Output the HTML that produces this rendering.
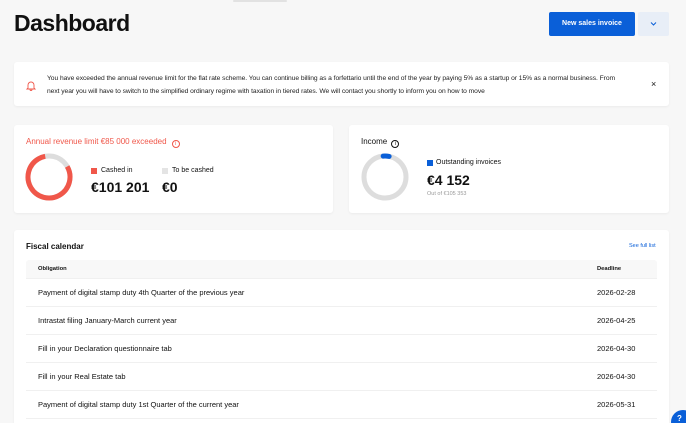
<!DOCTYPE html>
<html style="overflow:hidden;width:686px;height:423px"><head><style>
*{margin:0;padding:0;box-sizing:border-box}
body{width:686px;height:423px;overflow:hidden;background:#f7f7f7;font-family:"Liberation Sans",sans-serif;color:#111;position:relative}
.abs{position:absolute}
.card{position:absolute;background:#fff;border-radius:3px;box-shadow:0 1px 2px rgba(0,0,0,.05)}
.row{position:absolute;left:26px;width:631px;height:28px;border-bottom:1px solid #f0f0f0;font-size:7.5px;line-height:28px}
.row span{position:absolute;left:12px}
.row b{position:absolute;left:571px;font-weight:normal}
.info{display:inline-block;width:8px;height:8px;border:1px solid;border-radius:50%;vertical-align:-1px;font-size:5.5px;text-align:center;line-height:6px}
</style></head><body>
<div class="abs" style="left:233px;top:0;width:54px;height:2px;background:#e2e2e2;border-radius:1px"></div>
<div class="abs" style="left:14px;top:10px;font-size:23px;font-weight:bold;letter-spacing:-0.5px">Dashboard</div>
<div class="abs" style="left:549px;top:12px;width:86px;height:24px;background:#0a5fd8;border-radius:2px;color:#fff;font-size:7px;font-weight:bold;text-align:center;line-height:24px">New sales invoice</div>
<div class="abs" style="left:638px;top:12px;width:31px;height:24px;background:#e8eef7;border-radius:2px"><svg width="31" height="24"><path d="M13 10.5l2.5 2.5 2.5-2.5" stroke="#0a5fd8" fill="none" stroke-width="1"/></svg></div>

<div class="card" style="left:14px;top:62px;width:655px;height:44px">
<svg class="abs" style="left:12px;top:18px" width="10" height="11"><path d="M2 8V5a3 3 0 016 0v3l1 1H1z M4 9.5a1 1 0 002 0" stroke="#f0574a" fill="none" stroke-width="0.9"/></svg>
<div class="abs" style="left:33px;top:11px;width:615px;font-size:6.7px;line-height:12.7px;color:#222;letter-spacing:-0.05px;white-space:nowrap">You have exceeded the annual revenue limit for the flat rate scheme. You can continue billing as a forfettario until the end of the year by paying 5% as a startup or 15% as a normal business. From<br>next year you will have to switch to the simplified ordinary regime with taxation in tiered rates. We will contact you shortly to inform you on how to move</div>
<div class="abs" style="left:637px;top:17px;font-size:9px">×</div>
</div>

<div class="card" style="left:14px;top:125px;width:319px;height:88px">
<div class="abs" style="left:12px;top:12px;font-size:8px;color:#f0574a">Annual revenue limit €85 000 exceeded <span class="info" style="margin-left:3px">i</span></div>
<svg class="abs" style="left:10px;top:27px" width="50" height="50"><circle cx="25" cy="25" r="21" stroke="#ddd" stroke-width="5" fill="none"/><circle cx="25" cy="25" r="21" stroke="#f0574a" stroke-width="5" fill="none" stroke-dasharray="106 200" style="transform-origin:25px 25px;transform:rotate(-30deg)"/></svg>
<div class="abs" style="left:77px;top:43px;width:6px;height:6px;background:#f0574a"></div>
<div class="abs" style="left:87px;top:42px;font-size:7px">Cashed in</div>
<div class="abs" style="left:148px;top:43px;width:6px;height:6px;background:#e4e4e4"></div>
<div class="abs" style="left:158px;top:42px;font-size:7px">To be cashed</div>
<div class="abs" style="left:77px;top:54px;font-size:14px;font-weight:bold">€101 201</div>
<div class="abs" style="left:148px;top:54px;font-size:14px;font-weight:bold">€0</div>
</div>

<div class="card" style="left:349px;top:125px;width:320px;height:88px">
<div class="abs" style="left:12px;top:12px;font-size:8px">Income <span class="info" style="margin-left:2px">i</span></div>
<svg class="abs" style="left:11px;top:27px" width="50" height="50"><circle cx="25" cy="25" r="21" stroke="#ddd" stroke-width="5" fill="none"/><circle cx="25" cy="25" r="21" stroke="#0a5fd8" stroke-width="5" fill="none" stroke-dasharray="6 200" stroke-linecap="round" style="transform-origin:25px 25px;transform:rotate(-95deg)"/></svg>
<div class="abs" style="left:78px;top:35px;width:6px;height:6px;background:#0a5fd8"></div>
<div class="abs" style="left:87px;top:34px;font-size:7px">Outstanding invoices</div>
<div class="abs" style="left:78px;top:47px;font-size:14px;font-weight:bold">€4 152</div>
<div class="abs" style="left:78px;top:66px;font-size:5.5px;color:#999">Out of €105 353</div>
</div>

<div class="card" style="left:14px;top:230px;width:655px;height:200px">
<div class="abs" style="left:12px;top:12px;font-size:8px;font-weight:bold">Fiscal calendar</div>
<div class="abs" style="left:615px;top:13px;font-size:5.5px;color:#0a5fd8">See full list</div>
</div>
<div class="row" style="top:260px;height:19px;line-height:19px;background:#f8f8f8;font-size:5.8px;font-weight:bold;border-radius:3px 3px 0 0"><span>Obligation</span><b style="font-weight:bold">Deadline</b></div>
<div class="row" style="top:279px"><span>Payment of digital stamp duty 4th Quarter of the previous year</span><b>2026-02-28</b></div>
<div class="row" style="top:307px"><span>Intrastat filing January-March current year</span><b>2026-04-25</b></div>
<div class="row" style="top:335px"><span>Fill in your Declaration questionnaire tab</span><b>2026-04-30</b></div>
<div class="row" style="top:363px"><span>Fill in your Real Estate tab</span><b>2026-04-30</b></div>
<div class="row" style="top:391px"><span>Payment of digital stamp duty 1st Quarter of the current year</span><b>2026-05-31</b></div>
<div class="abs" style="left:671px;top:410px;width:24px;height:24px;border-radius:50%;background:#0a5fd8;color:#fff;font-size:8px;font-weight:bold;padding:4px 0 0 6px">?</div>
</body></html>
